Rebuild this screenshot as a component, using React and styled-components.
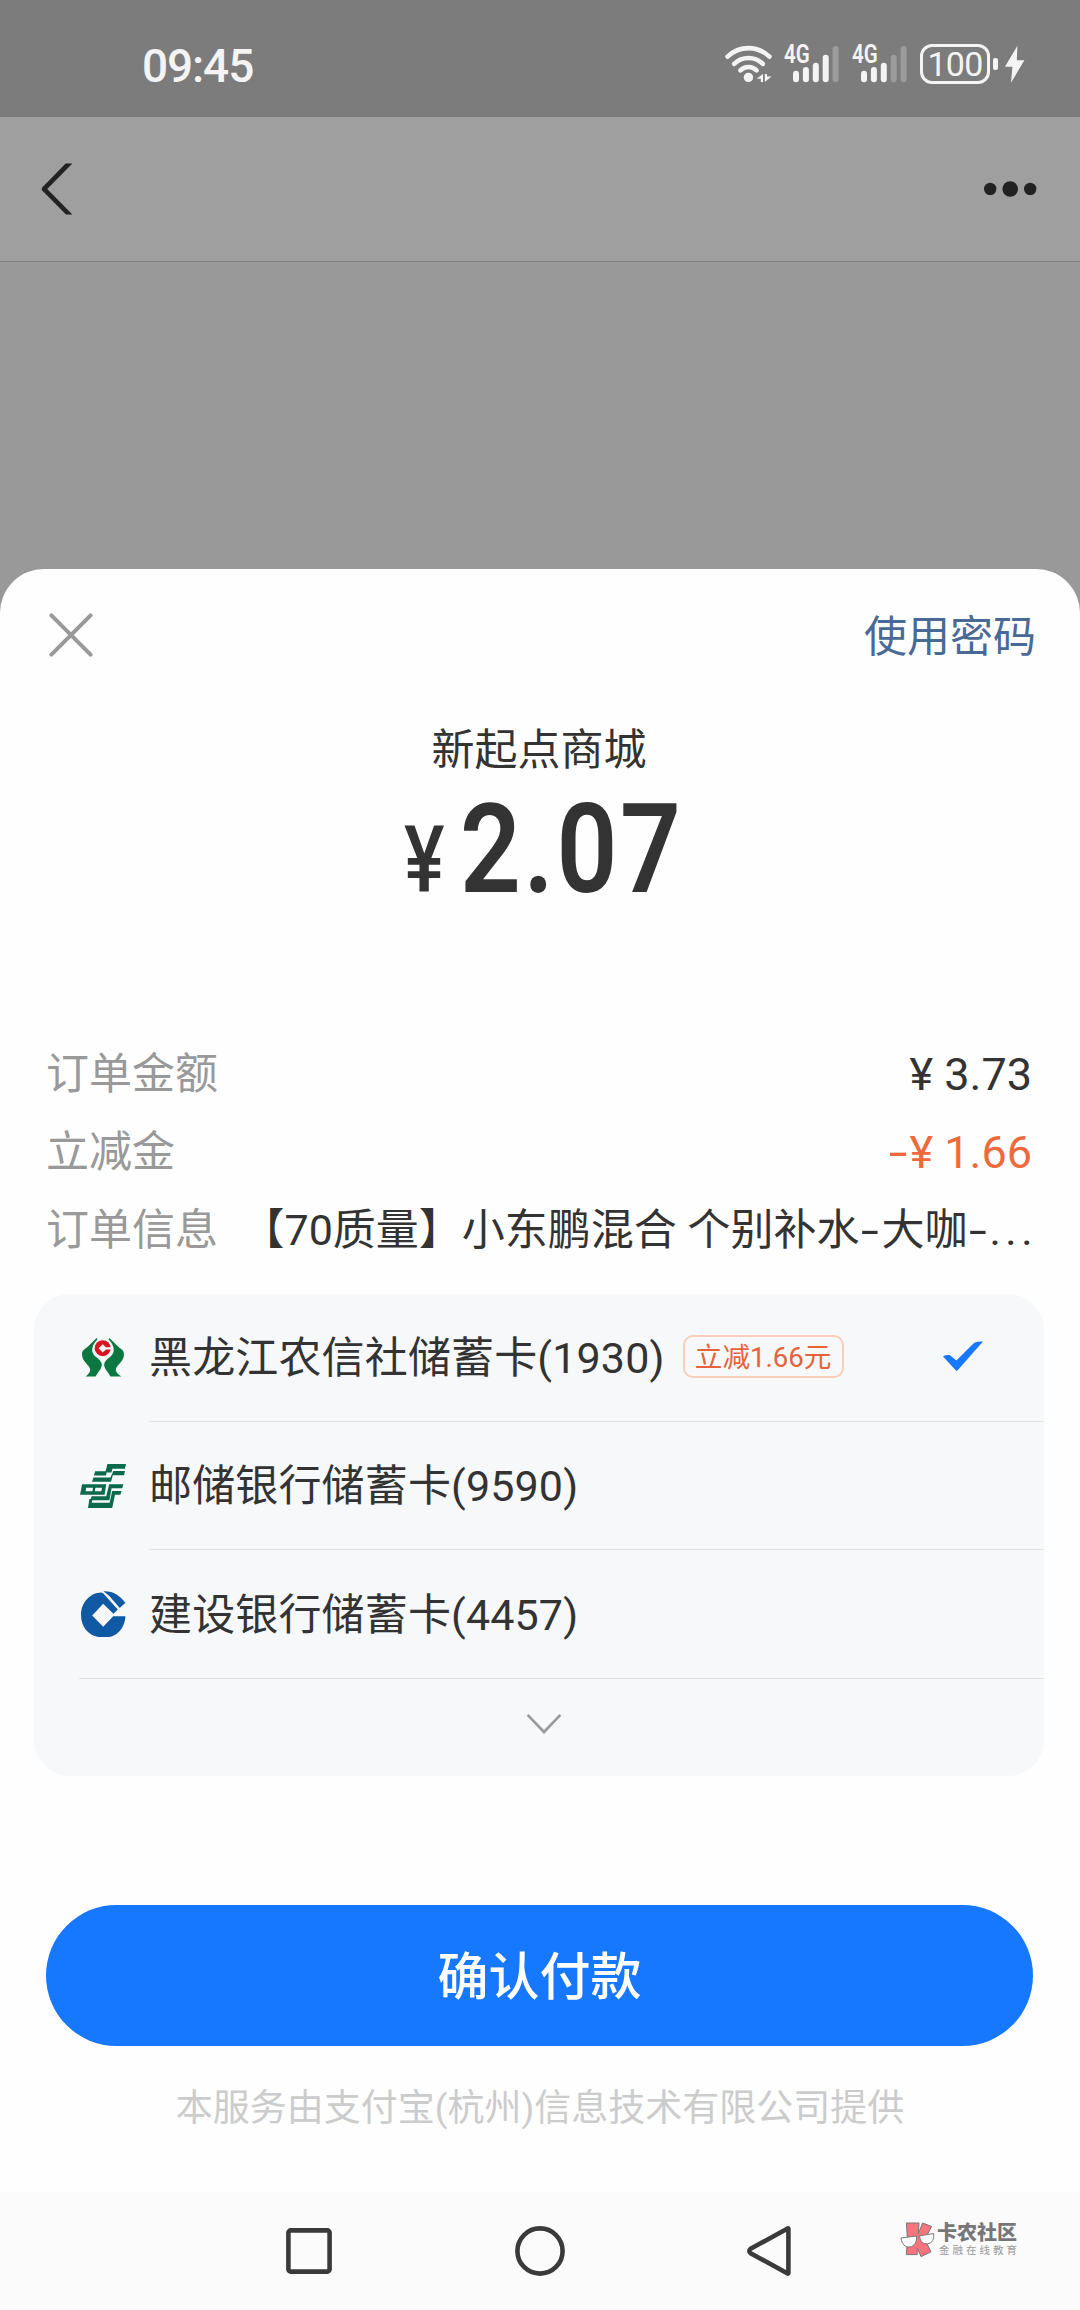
import styled, { createGlobalStyle } from "styled-components";

const orderRows = [
    { id: 1, label: "订单金额", value: "¥ 3.73" },
    { id: 2, label: "立减金", value: "-¥ 1.66", discount: true },
];

const cards = [
    { id: 1, logo: "rural", name: "黑龙江农信社储蓄卡(1930)", tag: "立减1.66元", selected: true },
    { id: 2, logo: "postal", name: "邮储银行储蓄卡(9590)" },
    { id: 3, logo: "ccb", name: "建设银行储蓄卡(4457)" },
];

const Wifi = () => (
    <svg width="48" height="40" viewBox="0 0 48 40" fill="none" stroke="#f4f4f4" strokeWidth="4.6" strokeLinecap="round">
        <path d="M3.6 12.6A30 30 0 0 1 45.4 12.6" />
        <path d="M10.2 19.8A20.5 20.5 0 0 1 38.8 19.8" />
        <path d="M16.4 26.4A11.5 11.5 0 0 1 32.6 26.4" />
        <circle cx="24.4" cy="33.4" r="4.7" fill="#f4f4f4" stroke="none" />
        <path d="M39 30V38H36.8V34.8H32.6ZM40.8 38V30H43V32.6H47.6Z" fill="#f4f4f4" stroke="none" />
    </svg>
);

const barTops = [26.7, 23, 18.7, 10.7, 2];

const Signal = ({ level }) => (
    <SignalBox>
        <svg width="56" height="40" viewBox="0 0 56 40">
            {
                barTops.map((top, i) => (
                    <rect key={i} x={9 + i * 9.9} y={top} width="6" height={38.3 - top} rx="3" fill={i < level ? "#f4f4f4" : "#9c9c9c"} />
                ))
            }
        </svg>
        <NetType>4G</NetType>
    </SignalBox>
);

const Bolt = () => (
    <svg width="21" height="40" viewBox="0 0 21 40">
        <path d="M13.4 1.8L1 22.8H8.4L7 38.8L20.4 16.2H12.8Z" fill="#f4f4f4" />
    </svg>
);

const BackIcon = () => (
    <svg width="32" height="52" viewBox="0 0 32 52">
        <path d="M24.6 .6H31.4L6.2 26L31.4 51.4H25L1.2 27.4Q0 26 1.2 24.6Z" fill="#222" />
    </svg>
);

const MoreIcon = () => (
    <svg width="54" height="18" viewBox="0 0 54 18" fill="#222">
        <circle cx="7.2" cy="9" r="6.2" />
        <circle cx="27.2" cy="9" r="7.8" />
        <circle cx="47.2" cy="9" r="6.2" />
    </svg>
);

const CloseIcon = () => (
    <svg width="44" height="44" viewBox="0 0 44 44" stroke="#999" strokeWidth="4" strokeLinecap="round">
        <path d="M2.4 2.4L41.6 41.6M41.6 2.4L2.4 41.6" />
    </svg>
);

const RuralLogo = () => (
    <svg width="46" height="46" viewBox="0 0 46 46">
        <path d="M16.6 3L17.6 4.2C11 11 10.4 17.6 16 22C20 25 22.6 27.6 21.6 31.6C20.8 35 17.4 37.6 15.6 41.6H5.6C8 39.4 10.4 37 10.2 34.4C9.8 30 2 26.4 2 19.4C2 14.4 6.4 13.6 9 10.6Z" fill="#0a7840" />
        <path d="M29.4 3L28.4 4.2C35 11 35.6 17.6 30 22C26 25 23.4 27.6 24.4 31.6C25.2 35 28.6 37.6 30.4 41.6H41.4C38.6 39.4 35.6 37 35.8 34.4C36.2 30 44 26.4 44 19.4C44 14.4 39.6 13.6 37 10.6Z" fill="#0a7840" />
        <circle cx="22.7" cy="13.2" r="8" fill="#d7141f" />
        <path d="M22.7 9.2L26 12.3H31V14.4H26L22.7 17.4L18.6 13.3Z" fill="#f6f8fa" />
    </svg>
);

const PostalLogo = () => (
    <svg width="46" height="46" viewBox="0 0 46 46" fill="#0b6a4b">
        <path d="M27.4 1H46L45 5.7H32.4L31.4 9.6H26.6L26 12.6H13.8L15.2 8.3H25.6Z" />
        <path d="M33.4 8H45L44 12.2H32.8L31 18.8H12L13.4 14.4H30.4Z" />
        <path d="M2 21.2H26.2L24.6 31.8H0L1.2 26ZM6.2 24.8L5.6 28.2H12.4L13 24.8ZM15.4 24.8L14.8 28.2H21.4L22 24.8Z" fillRule="evenodd" />
        <path d="M29.2 21.2H43.4L42.2 25.2H31.6L29.4 37.2H10.4L11.6 33.2H26.2Z" />
        <path d="M32.2 28H41.6L40.4 31.8H35L32.2 45H8L9.4 36H12.4L11.8 39.8H29.6Z" />
    </svg>
);

const CcbLogo = () => (
    <svg width="46" height="48" viewBox="0 0 46 48" fill="#1059a4">
        <path d="M23.4 3.4L37.8 19.4L33.4 23.8L23.2 13.8L12.2 25.4L23.2 36.8L33.2 26.2H45.4C45 38.4 36 47.2 27 47H18.4C8 45.4 1 36.4 1 25C1 12.6 10 2.8 21.4 2.6Z" />
        <path d="M23.4 1.2C32.4 .6 40.4 5.4 45.4 12.8L39.8 18L30.6 7.4C28.6 5.2 26 3.2 23.4 1.2Z" />
    </svg>
);

const logos = { rural: RuralLogo, postal: PostalLogo, ccb: CcbLogo };

const CheckIcon = () => (
    <svg width="42" height="32" viewBox="0 0 42 32">
        <path d="M1 16.4Q3.4 14.6 7.6 15L14.4 20.6L32 3Q35 .8 41 1.6L15.4 30.6Q14.6 31 14 30.4Z" fill="#1677ff" />
    </svg>
);

const ArrowDown = () => (
    <svg width="36" height="22" viewBox="0 0 36 22" fill="none" stroke="#999" strokeWidth="2.6">
        <path d="M1.6 1.8L18 19L34.4 1.8" />
    </svg>
);

const MascotLogo = () => (
    <svg width="36" height="38" viewBox="0 0 36 38" stroke="#777" strokeWidth="1">
        <path d="M6.4 2H19L18.4 12.6L22.6 2L31.6 5.4L24.8 18.6L31 30.8L21 35.6L17.2 27V33.6H6.4L7.4 18Z" fill="#f9747d" />
        <path d="M1 17L16.4 15C17.2 20.6 14.6 25.4 9.6 26C5 26.4 1.8 23 1 17Z" fill="#fff" />
        <path d="M19.6 14.8L33.6 12.6C34.2 18.4 32.4 22 27.6 22.8C23 23.2 20.2 20.6 19.6 14.8Z" fill="#fff" />
    </svg>
);

const App = () => {
    return (
        <Page>
            <GlobalStyle />
            <StatusBar>
                <Clock>09:45</Clock>
                <StatusIcons>
                    <Wifi />
                    <Signal level={4} />
                    <Signal level={3} />
                    <Battery>
                        <BatteryLevel>100</BatteryLevel>
                        <BatteryTip />
                    </Battery>
                    <Bolt />
                </StatusIcons>
            </StatusBar>
            <TitleBar>
                <BackIcon />
                <MoreIcon />
            </TitleBar>

            <Sheet>
                <SheetHeader>
                    <CloseIcon />
                    <PasswordLink>使用密码</PasswordLink>
                </SheetHeader>
                <Merchant>新起点商城</Merchant>
                <Amount>
                    <Currency>¥</Currency>
                    <Price>2.07</Price>
                </Amount>

                <OrderList>
                    {
                        orderRows.map(row => (
                            <OrderRow key={row.id}>
                                <Label>{row.label}</Label>
                                <Value $discount={row.discount}>
                                    {row.discount && <Dash>-</Dash>}{row.value.replace("-", "")}
                                </Value>
                            </OrderRow>
                        ))
                    }
                    <OrderRow>
                        <Label>订单信息</Label>
                        <Detail>【70质量】小东鹏混合 个别补水<Dash>-</Dash>大咖<Dash>-</Dash><Dots>...</Dots></Detail>
                    </OrderRow>
                </OrderList>

                <CardPanel>
                    {
                        cards.map(({ id, logo, name, tag, selected }, index) => {
                            const Logo = logos[logo];
                            return (
                                <CardRow key={id}>
                                    <LogoBox><Logo /></LogoBox>
                                    <CardBody $last={index === cards.length - 1}>
                                        <CardName>{name}</CardName>
                                        {tag && <Tag>{tag}</Tag>}
                                        {selected && <Selected><CheckIcon /></Selected>}
                                    </CardBody>
                                </CardRow>
                            )
                        })
                    }
                    <MoreCards><ArrowDown /></MoreCards>
                </CardPanel>

                <PayButton>确认付款</PayButton>
                <Provider>本服务由支付宝(杭州)信息技术有限公司提供</Provider>
            </Sheet>

            <NavBar>
                <svg width="52" height="52" viewBox="0 0 52 52" fill="none" stroke="#3a3a3a" strokeWidth="4.6">
                    <rect x="5.4" y="5.4" width="41.2" height="41.2" rx="2.4" />
                </svg>
                <svg width="52" height="52" viewBox="0 0 52 52" fill="none" stroke="#3a3a3a" strokeWidth="4.6">
                    <circle cx="26" cy="26" r="22.6" />
                </svg>
                <svg width="52" height="52" viewBox="0 0 52 52" fill="none" stroke="#3a3a3a" strokeWidth="4.6" strokeLinejoin="round">
                    <path d="M43.4 3.8V48.2Q43.2 49 42.2 48.2L5.6 28.2Q3 26 5.6 23.8L42.2 3.8Q43.2 3 43.4 3.8Z" />
                </svg>
                <Watermark>
                    <MascotLogo />
                    <WatermarkText>
                        <strong>卡农社区</strong>
                        <small>金融在线教育</small>
                    </WatermarkText>
                </Watermark>
            </NavBar>
        </Page>
    )
}

const GlobalStyle = createGlobalStyle`
    *{
        box-sizing:border-box;
    }
    body{
        margin:0;
        background:#999;
        font-family:Roboto, "Noto Sans CJK SC", sans-serif;
        font-size:43px;
        color:#333;
    }
    svg{
        display:block;
        flex:none;
    }
`

const Page = styled.div`
    width:1080px;
    height:2310px;
    display:flex;
    flex-direction:column;
    overflow:hidden;
    background:#999;
`

const StatusBar = styled.header`
    height:117px;
    padding:11px 55px 0 142px;
    display:flex;
    align-items:center;
    justify-content:space-between;
    background:#7c7c7c;
    color:#f4f4f4;
`

const Clock = styled.div`
    font-size:46px;
    font-weight:500;
    line-height:50px;
    letter-spacing:-1.1px;
    padding-top:4px;
`

const StatusIcons = styled.div`
    display:flex;
    align-items:center;
    gap:12px;
`

const SignalBox = styled.div`
    position:relative;
    width:56px;
    height:40px;
`

const NetType = styled.span`
    position:absolute;
    left:0;
    top:-4px;
    font-size:25px;
    line-height:30px;
    font-weight:600;
    transform:scaleX(0.82);
    transform-origin:0 50%;
`

const Battery = styled.div`
    display:flex;
    align-items:center;
    gap:3px;
    margin-right:-6px;
`

const BatteryLevel = styled.div`
    width:70px;
    height:40px;
    border:3px solid #f4f4f4;
    border-radius:12px;
    font-size:34px;
    line-height:35px;
    text-align:center;
    letter-spacing:-0.8px;
`

const BatteryTip = styled.div`
    width:5px;
    height:12px;
    border-radius:2px;
    background:#f4f4f4;
`

const TitleBar = styled.div`
    height:145px;
    padding:0 43px 0 41px;
    display:flex;
    align-items:center;
    justify-content:space-between;
    background:#9f9f9f;
    border-bottom:1px solid #7e7e7e;
`

const Sheet = styled.main`
    margin-top:307px;
    height:1623px;
    display:flex;
    flex-direction:column;
    align-items:center;
    background:#fefefe;
    border-radius:44px 44px 0 0;
`

const SheetHeader = styled.div`
    width:100%;
    height:132px;
    padding:0 44px 0 49px;
    display:flex;
    align-items:center;
    justify-content:space-between;
`

const PasswordLink = styled.a`
    color:#486a94;
    line-height:60px;
    padding-top:3px;
`

const Merchant = styled.div`
    margin-top:19px;
    margin-right:2px;
    line-height:60px;
`

const Amount = styled.div`
    margin-top:10px;
    height:120px;
    display:flex;
    justify-content:center;
    align-items:baseline;
    line-height:120px;
`

const Currency = styled.span`
    width:50px;
    margin-left:6px;
    font-size:93px;
    font-weight:500;
    transform:scaleX(0.82);
    transform-origin:0 50%;
`

const Price = styled.span`
    width:222px;
    margin-left:6px;
    font-size:124px;
    font-weight:600;
    letter-spacing:3px;
    transform:scaleX(0.86);
    transform-origin:0 50%;
`

const OrderList = styled.div`
    width:100%;
    margin-top:123px;
    padding:0 48px 0 46px;
`

const OrderRow = styled.div`
    height:78px;
    display:flex;
    align-items:center;
    justify-content:space-between;
    line-height:60px;
    white-space:nowrap;
`

const Label = styled.span`
    padding-top:4px;
    color:#999;
`

const Value = styled.span`
    font-size:45px;
    padding-top:5px;
    color:${props => props.$discount ? "#ee6a3c" : "#333"};
`

const Detail = styled.span`
    padding-top:3px;
    color:#333;
`

const Dash = styled.span`
    display:inline-block;
    width:22px;
    text-align:center;
    transform:scaleX(1.5);
`

const Dots = styled.span`
    letter-spacing:4.5px;
    margin-right:-5px;
`

const CardPanel = styled.section`
    width:1010px;
    margin-top:27px;
    margin-right:2px;
    background:#f6f8fa;
    border-radius:36px;
`

const CardRow = styled.div`
    height:128px;
    padding-left:46px;
    display:flex;
`

const LogoBox = styled.div`
    width:69px;
    display:flex;
    align-items:center;
`

const CardBody = styled.div`
    flex:1;
    display:flex;
    align-items:center;
    border-bottom:${props => props.$last ? "none" : "1px solid #dfe1e3"};
`

const CardName = styled.span`
    line-height:60px;
    padding-top:1px;
    letter-spacing:0.15px;
`

const Tag = styled.span`
    height:43px;
    width:161px;
    margin-left:18px;
    margin-bottom:2px;
    padding-top:2px;
    display:flex;
    align-items:center;
    justify-content:center;
    border:2px solid #f9cdb9;
    border-radius:10px;
    color:#e5633a;
    font-size:27.6px;
    line-height:1;
`

const Selected = styled.span`
    margin-left:auto;
    margin-right:60px;
    margin-bottom:4px;
`

const MoreCards = styled.div`
    height:98px;
    margin-left:45px;
    padding:0 36px 8px 0;
    display:flex;
    align-items:center;
    justify-content:center;
    border-top:1px solid #dfe1e3;
`

const PayButton = styled.button`
    width:987px;
    height:141px;
    margin-top:129px;
    margin-right:1px;
    padding:0 0 5px;
    border:none;
    border-radius:71px;
    background:#1677ff;
    color:#fff;
    font-family:inherit;
    font-size:51px;
    font-weight:500;
`

const Provider = styled.div`
    margin-top:37px;
    line-height:52px;
    font-size:37px;
    color:#ccc;
`

const NavBar = styled.nav`
    height:118px;
    padding-left:283px;
    display:flex;
    align-items:center;
    gap:179px;
    background:#fbfbfb;
`

const Watermark = styled.div`
    margin-left:-76px;
    margin-top:-22px;
    display:flex;
    align-items:center;
    gap:1px;
`

const WatermarkText = styled.div`
    display:flex;
    flex-direction:column;
    white-space:nowrap;
    strong{
        font-size:20px;
        line-height:22px;
        font-weight:900;
        color:#777;
    }
    small{
        margin-left:2px;
        font-size:10.5px;
        line-height:14px;
        letter-spacing:3px;
        color:#999;
    }
`

export default App;
